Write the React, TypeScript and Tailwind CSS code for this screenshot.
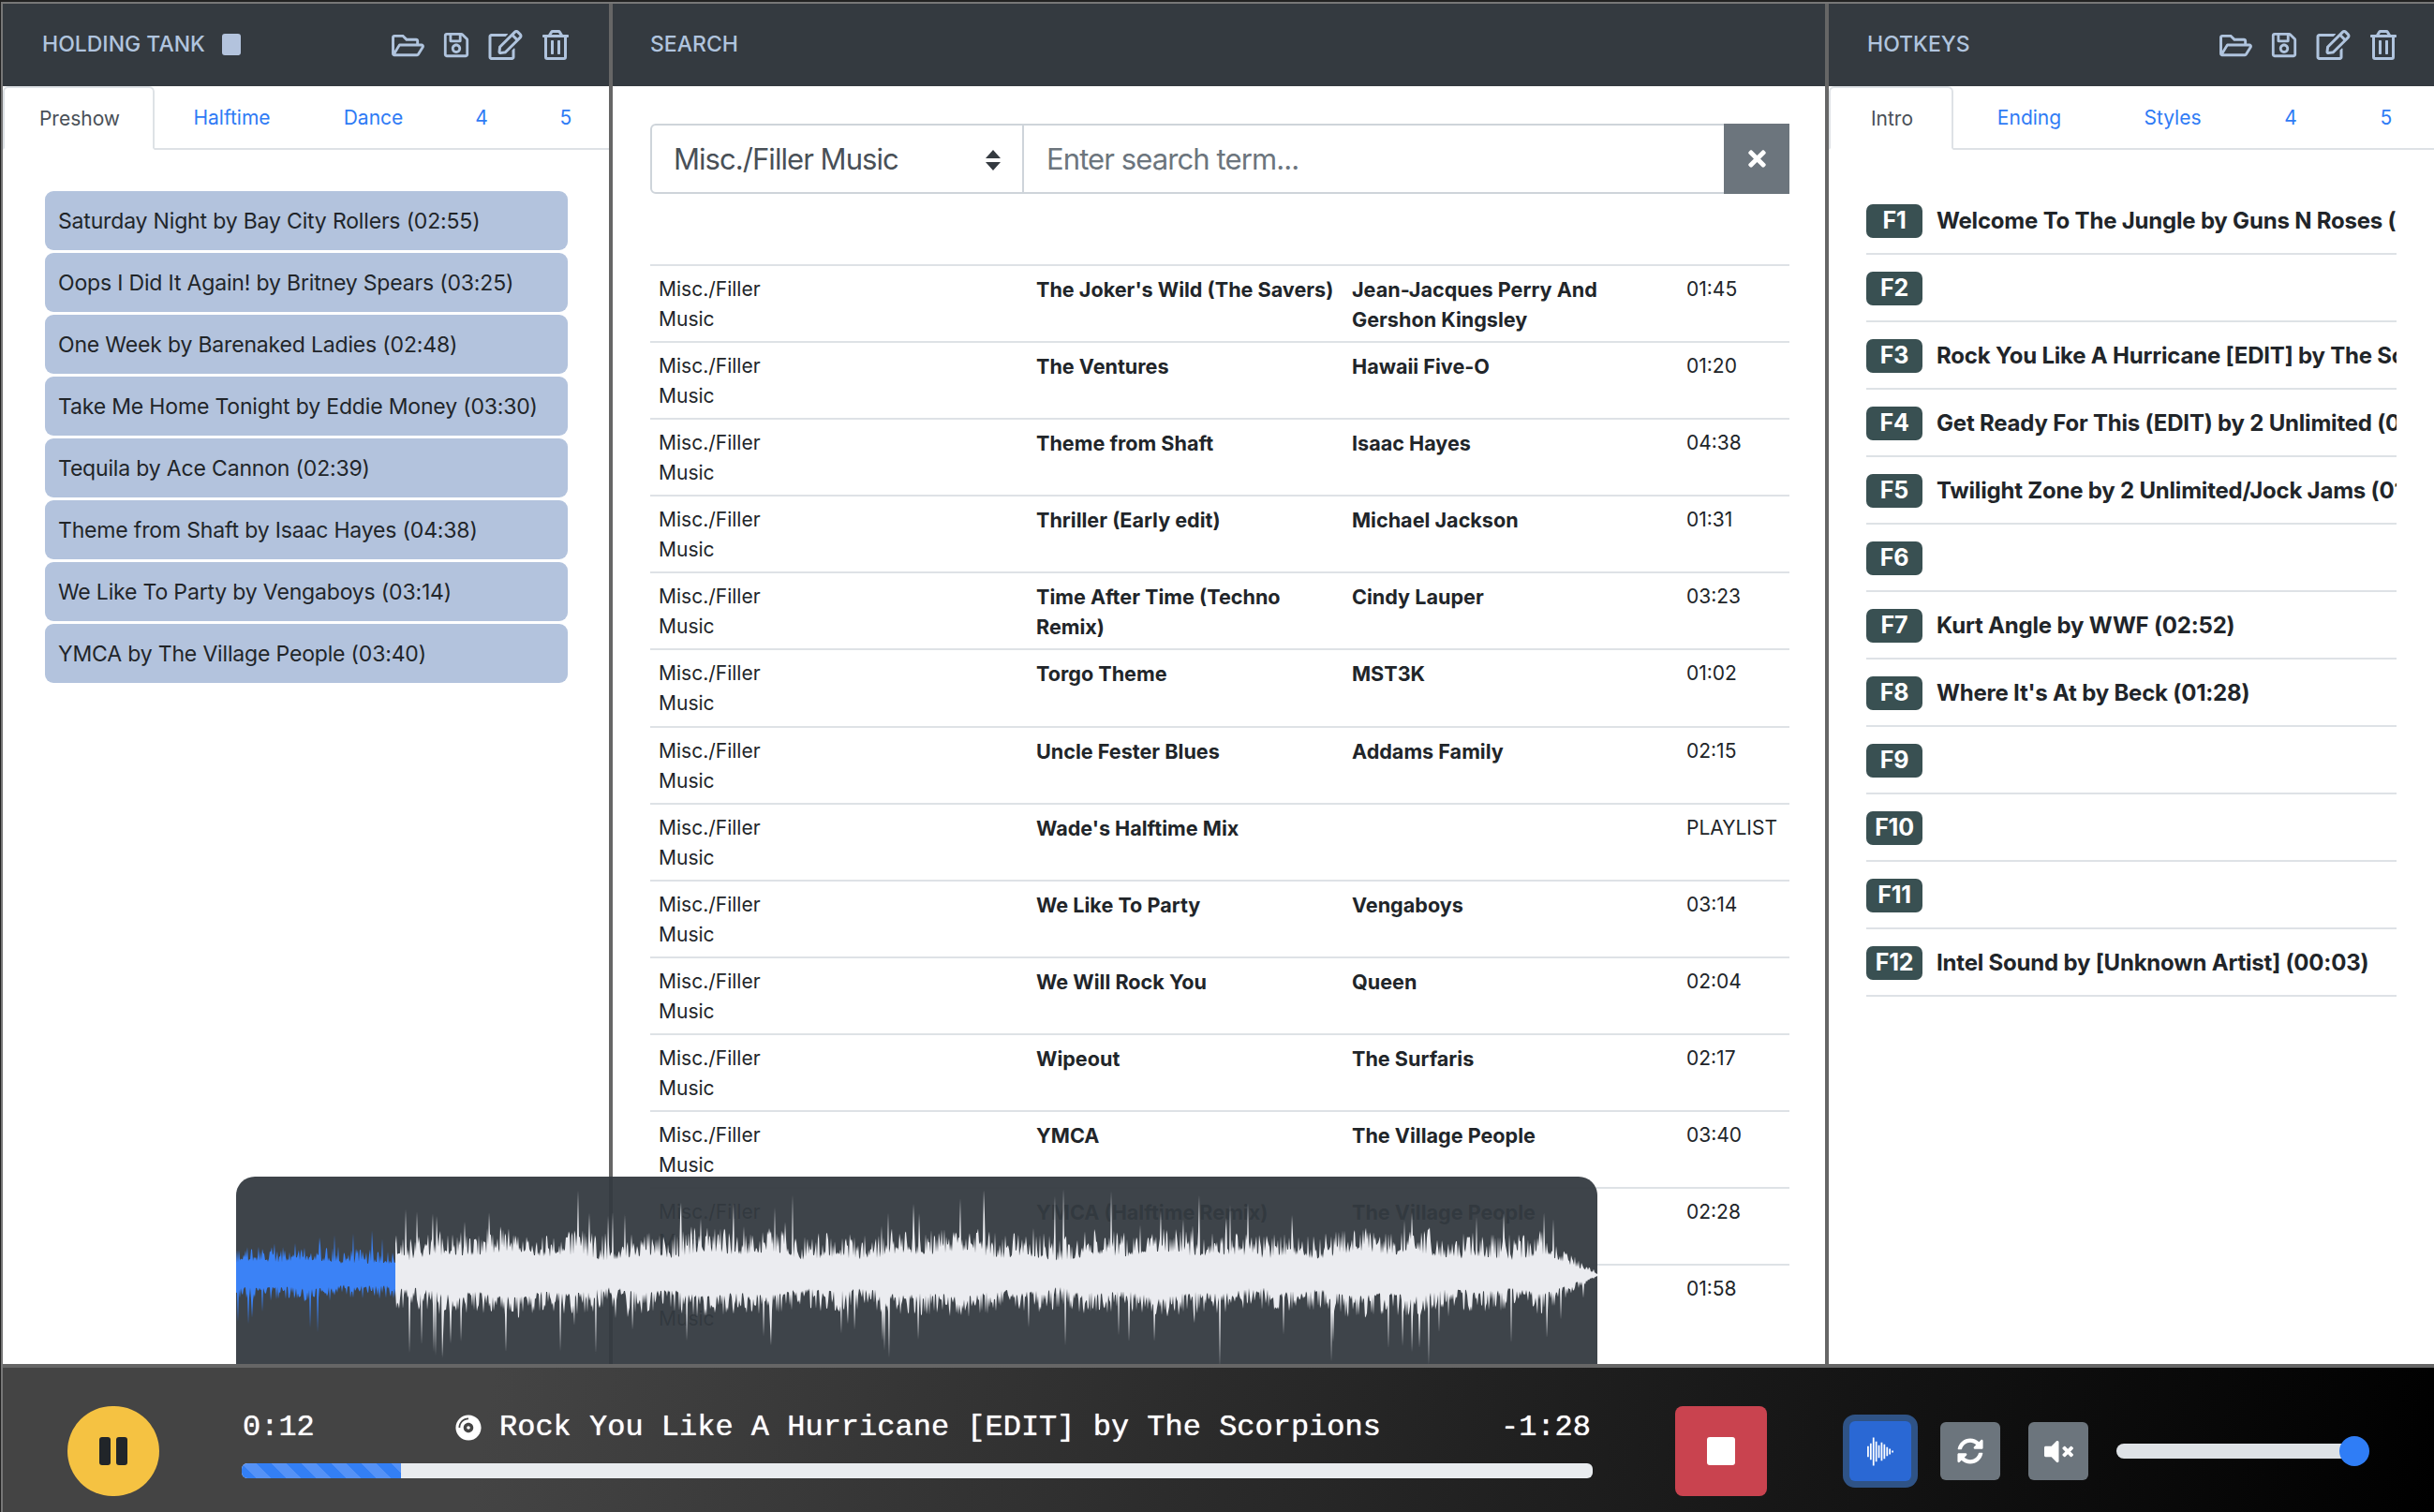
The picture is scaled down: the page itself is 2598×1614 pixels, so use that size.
import { FaCompactDisc, FaRegEdit, FaRegFolderOpen, FaRegSave, FaRegTrashAlt, FaSyncAlt, FaTimes, FaVolumeMute } from 'react-icons/fa';

const holdingTank = [
  'Saturday Night by Bay City Rollers (02:55)',
  'Oops I Did It Again! by Britney Spears (03:25)',
  'One Week by Barenaked Ladies (02:48)',
  'Take Me Home Tonight by Eddie Money (03:30)',
  'Tequila by Ace Cannon (02:39)',
  'Theme from Shaft by Isaac Hayes (04:38)',
  'We Like To Party by Vengaboys (03:14)',
  'YMCA by The Village People (03:40)',
];

const results = [
  ["The Joker's Wild (The Savers)", 'Jean-Jacques Perry And Gershon Kingsley', '01:45'],
  ['The Ventures', 'Hawaii Five-O', '01:20'],
  ['Theme from Shaft', 'Isaac Hayes', '04:38'],
  ['Thriller (Early edit)', 'Michael Jackson', '01:31'],
  ['Time After Time (Techno Remix)', 'Cindy Lauper', '03:23'],
  ['Torgo Theme', 'MST3K', '01:02'],
  ['Uncle Fester Blues', 'Addams Family', '02:15'],
  ["Wade's Halftime Mix", '', 'PLAYLIST'],
  ['We Like To Party', 'Vengaboys', '03:14'],
  ['We Will Rock You', 'Queen', '02:04'],
  ['Wipeout', 'The Surfaris', '02:17'],
  ['YMCA', 'The Village People', '03:40'],
  ['YMCA (Halftime Remix)', 'The Village People', '02:28'],
  ['Zombie Nation', 'Kernkraft', '01:58'],
];

const hotkeys = [
  'Welcome To The Jungle by Guns N Roses (04:31)',
  '',
  'Rock You Like A Hurricane [EDIT] by The Scorpions (01:40)',
  'Get Ready For This (EDIT) by 2 Unlimited (01:52)',
  'Twilight Zone by 2 Unlimited/Jock Jams (01:20)',
  '',
  'Kurt Angle by WWF (02:52)',
  "Where It's At by Beck (01:28)",
  '',
  '',
  '',
  'Intel Sound by [Unknown Artist] (00:03)',
];

// seeded noise so the waveform comes out the same on every render
const buildWave = (from: number, to: number, seed: number, scale: number, total: number) => {
  let s = seed;
  const rand = () => {
    s = (s * 16807) % 2147483647;
    return s / 2147483647;
  };
  const top: string[] = [];
  const bottom: string[] = [];
  for (let x = from; x <= to; x += 1) {
    const fade = Math.min(1, (total - x) / 60);
    const body = 19 + Math.sin(x / 37) * 3 + Math.sin(x / 11) * 2;
    const up = (body + Math.pow(rand(), 1.6) * 28 + (rand() > 0.965 ? 18 + rand() * 36 : 0)) * scale * fade;
    const down = (body - 2 + Math.pow(rand(), 1.6) * 24 + (rand() > 0.965 ? 18 + rand() * 46 : 0)) * scale * fade;
    top.push(`${x},${(104 - up).toFixed(1)}`);
    bottom.unshift(`${x},${(106 + down).toFixed(1)}`);
  }
  return `M${top.join('L')}L${bottom.join('L')}Z`;
};

const playedWave = buildWave(0, 170, 4711, 0.62, 1453);
const restWave = buildWave(170, 1453, 90210, 1, 1453);

const PanelIcons = () => (
  <div className="flex items-center text-[#b0c4de]">
    <FaRegFolderOpen className="h-[31px] w-[35px]" />
    <FaRegSave className="ml-[20px] h-[30px] w-[28px]" />
    <FaRegEdit className="ml-[20px] h-[32px] w-[37px]" />
    <FaRegTrashAlt className="ml-[21px] h-[32px] w-[28px]" />
  </div>
);

const Tabs = ({ tabs, cells, first }: { tabs: string[]; cells: string[]; first: string }) => (
  <div className="flex h-[68px] shrink-0 border-b-2 border-[#dee2e6] text-[21px]">
    <div className={`${first} -mb-[2px] flex h-[68px] shrink-0 items-center justify-center rounded-t-md border-x-2 border-t-2 border-[#dee2e6] border-b-2 border-b-white pl-[2px] pt-[2px] text-[#495057]`}>
      {tabs[0]}
    </div>
    {tabs.slice(1).map((tab, i) => (
      <div key={tab} className={`${cells[i]} flex shrink-0 items-center justify-center pt-[2px] text-[#2f7bf5]`}>
        {tab}
      </div>
    ))}
  </div>
);

export default function App() {
  return (
    <div className="relative h-[1614px] w-[2598px] overflow-hidden border-l border-t-2 border-[#222] font-['Inter',sans-serif] text-[#212529]">
      <div className="flex h-full flex-col border-l-2 border-t-2 border-[#777] bg-white">
        <div className="flex h-[1452px] shrink-0">
          {/* Holding tank */}
          <section className="flex w-[651px] shrink-0 flex-col border-r-[4px] border-[#666]">
            <header className="flex h-[88px] shrink-0 items-center justify-between bg-[#343a40] pl-[42px] pr-[43px]">
              <div className="flex items-center gap-[18px] pb-[2px] text-[23px] font-medium text-[#b0c4de]">
                <span>HOLDING TANK</span>
                <span className="h-[23px] w-[20px] rounded-[3px] bg-[#b3c3dd]" />
              </div>
              <PanelIcons />
            </header>
            <Tabs
              tabs={['Preshow', 'Halftime', 'Dance', '4', '5']}
              first="w-[162px]"
              cells={['w-[165px]', 'w-[137px]', 'w-[94px]', 'w-[86px]']}
            />
            <div className="flex flex-col gap-[3px] pl-[45px] pr-[44px] pt-[44px]">
              {holdingTank.map((song) => (
                <div key={song} className="flex h-[63px] items-center rounded-[9px] bg-[#b3c3dd] pl-[14px] pt-[1px] text-[23px] tracking-[-0.17px] text-[#212529]">
                  {song}
                </div>
              ))}
            </div>
          </section>

          {/* Search */}
          <section className="flex w-[1298px] shrink-0 flex-col overflow-hidden border-r-[4px] border-[#666]">
            <header className="flex h-[88px] shrink-0 items-center bg-[#343a40] pb-[2px] pl-[40px] text-[23px] font-medium text-[#b0c4de]">SEARCH</header>
            <div className="flex flex-col pl-[40px] pr-[38px]">
              <div className="mt-[40px] flex h-[75px] shrink-0">
                <div className="relative w-[399px]">
                  <select className="h-full w-full appearance-none rounded-l-md border-2 border-[#ced4da] bg-white pl-[23px] pt-[2px] text-[31px] tracking-[-0.95px] text-[#495057]">
                    <option>Misc./Filler Music</option>
                  </select>
                  <svg viewBox="0 0 16 22" className="pointer-events-none absolute right-[25px] top-[28px] h-[22px] w-[16px] fill-[#343a40]">
                    <path d="M8 0l8 9H0zM8 22L0 13h16z" />
                  </svg>
                </div>
                <input
                  placeholder="Enter search term..."
                  className="h-full min-w-0 flex-1 border-y-2 border-r-0 border-[#ced4da] bg-white pl-[24px] text-[31px] tracking-[-0.9px] outline-none placeholder:text-[#6c757d]"
                />
                <button className="flex h-full w-[70px] items-center justify-center bg-[#6c757d] text-white">
                  <FaTimes className="h-[27px] w-[27px]" />
                </button>
              </div>
              <div className="mt-[75px] flex flex-col text-[21px]">
                {results.map(([title, artist, time]) => (
                  <div key={title} className="grid h-[82.1px] shrink-0 grid-cols-[412px_337px_357px_1fr] border-t-2 border-[#dee2e6] pt-[9px] leading-[32px]">
                    <div className="w-[130px] pl-[9px]">Misc./Filler Music</div>
                    <div className="pr-[10px] text-[21.6px] font-bold">{title}</div>
                    <div className="pr-[40px] text-[21.6px] font-bold">{artist}</div>
                    <div>{time}</div>
                  </div>
                ))}
              </div>
            </div>
          </section>

          {/* Hotkeys */}
          <section className="flex min-w-0 flex-1 flex-col">
            <header className="flex h-[88px] shrink-0 items-center justify-between bg-[#343a40] pl-[41px] pr-[40px]">
              <span className="pb-[2px] text-[23px] font-medium text-[#b0c4de]">HOTKEYS</span>
              <PanelIcons />
            </header>
            <Tabs
              tabs={['Intro', 'Ending', 'Styles', '4', '5']}
              first="w-[133px]"
              cells={['w-[162px]', 'w-[144px]', 'w-[108px]', 'w-[96px]']}
            />
            <div className="flex flex-col pl-[40px] pr-[40px] pt-[40px]">
              {hotkeys.map((song, i) => (
                <div key={i} className="flex h-[72px] items-start overflow-hidden whitespace-nowrap border-b-2 border-[#dee2e6] pt-[18px] text-[24px] font-bold tracking-[-0.2px] text-[#212529]">
                  <span className="mr-[15px] flex h-[36px] w-[60px] shrink-0 items-center justify-center rounded-[7px] bg-[#395052] text-[25px] font-bold text-white">
                    F{i + 1}
                  </span>
                  <span className="leading-[36px]">{song}</span>
                </div>
              ))}
            </div>
          </section>
        </div>

        {/* Player */}
        <footer className="relative z-10 flex h-[158px] shrink-0 items-center border-t-[4px] border-[#666] bg-[linear-gradient(100deg,#444_20%,#000_100%)] pl-[69px] pt-[24px]">
          <button className="flex h-[96px] w-[98px] shrink-0 items-center justify-center gap-[6px] rounded-full bg-[#f5c242]">
            <span className="h-[30px] w-[12px] rounded-[3px] bg-[#212529]" />
            <span className="h-[30px] w-[12px] rounded-[3px] bg-[#212529]" />
          </button>
          <div className="mb-[15px] ml-[88px] flex w-[1442px] shrink-0 flex-col">
            <div className="flex h-[38px] items-center font-['Liberation_Mono',monospace] text-[32px] text-white [text-shadow:0_0_1px_#fff]">
              <span className="w-[228px] shrink-0 pl-[1px]">0:12</span>
              <FaCompactDisc className="h-[28px] w-[28px] shrink-0" />
              <span className="ml-[19px]">Rock You Like A Hurricane [EDIT] by The Scorpions</span>
              <span className="ml-auto pr-[2px]">-1:28</span>
            </div>
            <div className="mt-[19px] h-[16px] overflow-hidden rounded-md bg-[#e9ecef]">
              <div className="h-full w-[170px] bg-[repeating-linear-gradient(45deg,#337ff5_0,#337ff5_11.3px,#5592f6_11.3px,#5592f6_22.6px)]" />
            </div>
          </div>
          <button className="ml-[88px] flex h-[96px] w-[98px] shrink-0 items-center justify-center rounded-lg bg-[#c9434f]">
            <span className="h-[30px] w-[30px] rounded-[3px] bg-white" />
          </button>
          <button className="ml-[88px] flex h-[64px] w-[66px] shrink-0 items-center justify-center rounded-md bg-[#2a68d4] ring-[7px] ring-[#2f5386]">
            <svg viewBox="0 0 30 32" className="h-[31px] w-[30px] stroke-white" strokeWidth="1.8">
              <path d="M1.5 10v12M4.5 7v18M7.5 .5v31M10.5 5v22M13.5 9v14M16.5 6v20M19.5 8v16M22.5 11v10M25.5 13v6M28.5 15v2" />
            </svg>
          </button>
          <button className="ml-[31px] flex h-[62px] w-[64px] shrink-0 items-center justify-center rounded-md bg-[#6c757d] text-white">
            <FaSyncAlt className="h-[28px] w-[28px]" />
          </button>
          <button className="ml-[30px] flex h-[62px] w-[64px] shrink-0 items-center justify-center rounded-md bg-[#6c757d] text-white">
            <FaVolumeMute className="h-[31px] w-[31px]" />
          </button>
          <div className="relative ml-[30px] h-[16px] w-[252px] shrink-0 rounded-full bg-[#dee2e6]">
            <span className="absolute -top-[8px] right-[-18px] h-[32px] w-[32px] rounded-full bg-[#2f7df6]" />
          </div>
        </footer>
      </div>

      {/* Waveform overlay */}
      <div className="absolute left-[251px] top-[1254px] h-[200px] w-[1453px] overflow-hidden rounded-t-[20px] bg-[#343a40]/95">
        <svg viewBox="0 0 1453 200" className="h-[200px] w-[1453px]">
          <path d={playedWave} fill="#3b82f6" />
          <path d={restWave} fill="#ebecf0" />
        </svg>
      </div>
    </div>
  );
}
